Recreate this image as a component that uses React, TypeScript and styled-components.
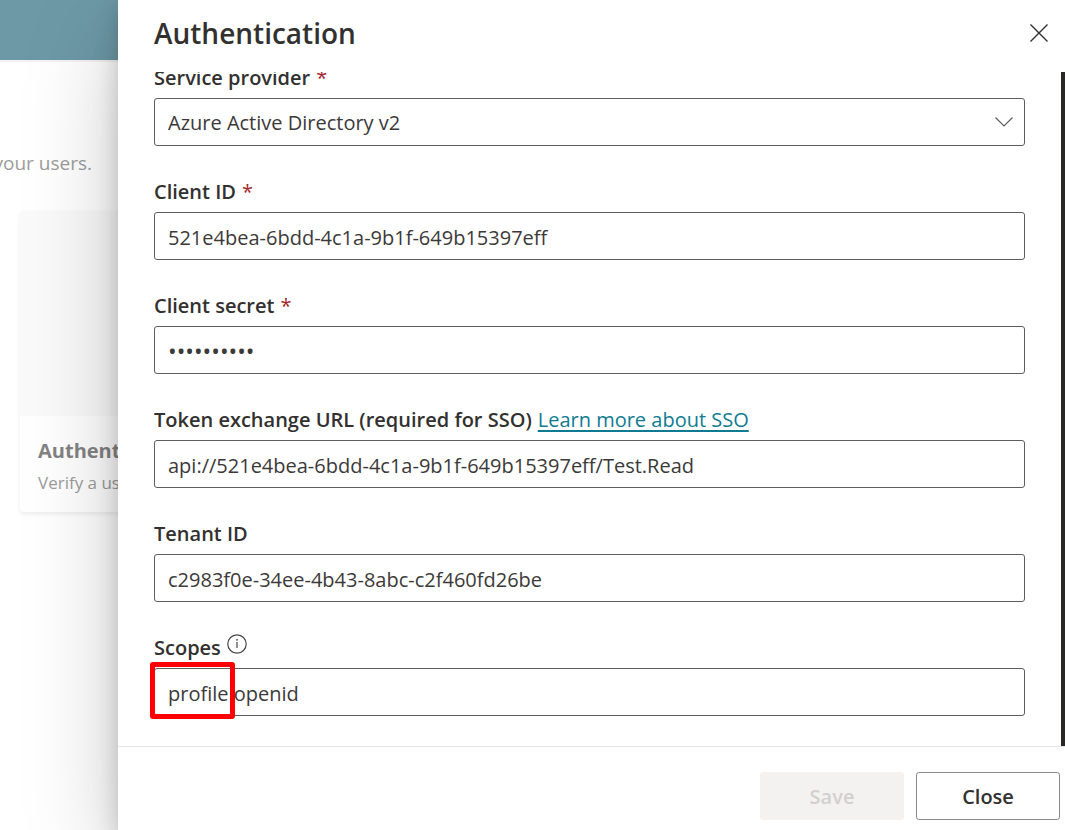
import React, { useState } from "react";
import styled, { createGlobalStyle } from "styled-components";

const GlobalStyle = createGlobalStyle`
  * { box-sizing: border-box; }
  html, body, #root { height: 100%; }
  body {
    margin: 0;
    overflow: hidden;
    background: #fff;
    color: #323130;
    font-family: "Segoe UI", "Open Sans", "Noto Sans", sans-serif;
    font-size: 20px;
    line-height: 28px;
  }
  button, input, select { font: inherit; color: inherit; }
`;

const Shell = styled.div`
  position: relative;
  height: 100vh;
  overflow: hidden;
`;

const Page = styled.div`
  display: flex;
  flex-direction: column;
`;

const TopBar = styled.div`
  height: 60px;
  background: #6d99a7;
`;

const TopRule = styled.div`
  height: 2px;
  background: #f5f2f0;
`;

const IntroRow = styled.div`
  display: flex;
  justify-content: flex-end;
  width: 92px;
  padding-top: 87px;
  font-size: 19px;
  white-space: nowrap;
  color: #9c9c9c;
`;

const Card = styled.section`
  width: 360px;
  margin: 34px 0 0 20px;
  border-radius: 4px;
  background: #fff;
  box-shadow: 0 2px 5px rgba(0, 0, 0, 0.08);
  overflow: hidden;
`;

const CardArt = styled.div`
  height: 205px;
  background: #fafafa;
`;

const CardText = styled.div`
  height: 96px;
  padding: 21px 18px;
`;

const CardTitle = styled.h2`
  margin: 0;
  font-size: 20px;
  line-height: 28px;
  font-weight: 700;
  color: #848383;
`;

const CardNote = styled.p`
  margin: 4px 0 0;
  font-size: 17px;
  line-height: 28px;
  color: #9c9c9c;
`;

const Panel = styled.aside`
  position: absolute;
  inset: 0 0 0 118px;
  display: flex;
  flex-direction: column;
  background: #fff;
  box-shadow: 0 32px 88px rgba(0, 0, 0, 0.22), 0 8px 22px rgba(0, 0, 0, 0.18);
`;

const PanelHeader = styled.header`
  display: flex;
  flex: none;
  align-items: flex-start;
  justify-content: space-between;
  height: 72px;
  padding: 16px 12px 0 36px;
`;

const PanelTitle = styled.h1`
  margin: 0;
  font-size: 28px;
  line-height: 34px;
  font-weight: 600;
`;

const IconButton = styled.button`
  display: flex;
  align-items: center;
  justify-content: center;
  width: 28px;
  height: 34px;
  padding: 0;
  border: 0;
  background: none;
`;

const PanelBody = styled.div`
  display: flex;
  flex: 1;
  min-height: 0;
`;

const Form = styled.form`
  display: flex;
  flex: 1;
  flex-direction: column;
  justify-content: flex-end;
  gap: 32px;
  min-width: 0;
  padding: 0 36px 30px;
  overflow: hidden;
`;

const ScrollThumb = styled.div`
  width: 4px;
  background: #292827;
`;

const Field = styled.div`
  flex: none;
`;

const LabelRow = styled.div`
  display: flex;
  gap: 6px;
  height: 34px;
`;

const Label = styled.label`
  font-weight: 600;
`;

const Required = styled.span`
  color: #a4262c;
  font-weight: 400;
`;

const HelpLink = styled.a`
  color: #0f7b93;
  text-decoration: underline;
  text-decoration-thickness: 2px;
  text-underline-offset: 3px;
`;

const Box = styled.div`
  position: relative;
`;

const TextBox = styled.input`
  display: block;
  width: 100%;
  height: 48px;
  padding: 2px 13px 0;
  border: 1px solid #605e5c;
  border-radius: 3px;
  background: #fff;
  color: #3b3a39;
  outline: 0;

  &[type="password"] { font-size: 23px; }
`;

const Select = styled.select`
  display: block;
  width: 100%;
  height: 48px;
  padding: 2px 40px 0 13px;
  border: 1px solid #605e5c;
  border-radius: 3px;
  background: #fff;
  color: #3b3a39;
  appearance: none;
`;

const Chevron = styled.svg`
  position: absolute;
  top: 18px;
  right: 11px;
  pointer-events: none;
`;

const Highlight = styled.div`
  position: absolute;
  top: -6px;
  left: -4px;
  width: 85px;
  height: 57px;
  border: 5px solid #f00;
  border-radius: 3px;
  pointer-events: none;
`;

const PanelFooter = styled.footer`
  display: flex;
  flex: none;
  justify-content: flex-end;
  gap: 12px;
  height: 84px;
  padding: 25px 5px 0;
  border-top: 1px solid #e6e6e6;
`;

const Button = styled.button`
  width: 144px;
  height: 48px;
  padding: 2px 0 0;
  border: 1px solid #8a8886;
  border-radius: 3px;
  background: #fff;
  font-weight: 600;

  &:disabled {
    border-color: #f3f2f1;
    background: #f3f2f1;
    color: #d2d0ce;
  }
`;

type TextFieldProps = {
  id: string;
  label: string;
  initial: string;
  type?: string;
  required?: boolean;
  extra?: React.ReactNode;
  marked?: boolean;
};

function TextField({ id, label, initial, type = "text", required, extra, marked }: TextFieldProps) {
  const [value, setValue] = useState(initial);
  return (
    <Field>
      <LabelRow>
        <Label htmlFor={id}>{label}</Label>
        {required && <Required aria-hidden="true">*</Required>}
        {extra}
      </LabelRow>
      <Box>
        <TextBox
          id={id}
          type={type}
          value={value}
          required={required}
          spellCheck={false}
          onChange={(e) => setValue(e.target.value)}
        />
        {marked && <Highlight />}
      </Box>
    </Field>
  );
}

const InfoIcon = () => (
  <svg width="20" height="20" viewBox="0 0 20 20" fill="none" aria-hidden="true">
    <circle cx="10" cy="10" r="9.2" stroke="#484644" strokeWidth="1.2" />
    <path d="M10 8v6" stroke="#484644" strokeWidth="1.2" />
    <circle cx="10" cy="5.8" r="0.9" fill="#484644" />
  </svg>
);

export default function App() {
  return (
    <>
      <GlobalStyle />
      <Shell>
        <Page>
          <TopBar />
          <TopRule />
          <IntroRow>your users.</IntroRow>
          <Card>
            <CardArt />
            <CardText>
              <CardTitle>Authentication</CardTitle>
              <CardNote>Verify a user</CardNote>
            </CardText>
          </Card>
        </Page>
        <Panel aria-label="Authentication">
          <PanelHeader>
            <PanelTitle>Authentication</PanelTitle>
            <IconButton type="button" aria-label="Dismiss">
              <svg width="18" height="18" viewBox="0 0 18 18" fill="none" stroke="#323130" strokeWidth="1.4">
                <path d="M0.5 0.5l17 17M17.5 0.5l-17 17" />
              </svg>
            </IconButton>
          </PanelHeader>
          <PanelBody>
            <Form>
              <Field>
                <LabelRow>
                  <Label htmlFor="provider">Service provider</Label>
                  <Required aria-hidden="true">*</Required>
                </LabelRow>
                <Box>
                  <Select id="provider">
                    <option>Azure Active Directory v2</option>
                  </Select>
                  <Chevron width="20" height="12" viewBox="0 0 20 12" fill="none" stroke="#605e5c" strokeWidth="1.2">
                    <path d="M1.5 1.5l8.5 8.5l8.5-8.5" />
                  </Chevron>
                </Box>
              </Field>
              <TextField id="client-id" label="Client ID" initial="521e4bea-6bdd-4c1a-9b1f-649b15397eff" required />
              <TextField id="client-secret" label="Client secret" initial="abcdefghij" type="password" required />
              <TextField
                id="token-url"
                label="Token exchange URL (required for SSO)"
                initial="api://521e4bea-6bdd-4c1a-9b1f-649b15397eff/Test.Read"
                extra={<HelpLink href="#sso">Learn more about SSO</HelpLink>}
              />
              <TextField id="tenant-id" label="Tenant ID" initial="c2983f0e-34ee-4b43-8abc-c2f460fd26be" />
              <TextField id="scopes" label="Scopes" initial="profile openid" extra={<InfoIcon />} marked />
            </Form>
            <ScrollThumb />
          </PanelBody>
          <PanelFooter>
            <Button type="button" disabled>Save</Button>
            <Button type="button">Close</Button>
          </PanelFooter>
        </Panel>
      </Shell>
    </>
  );
}
